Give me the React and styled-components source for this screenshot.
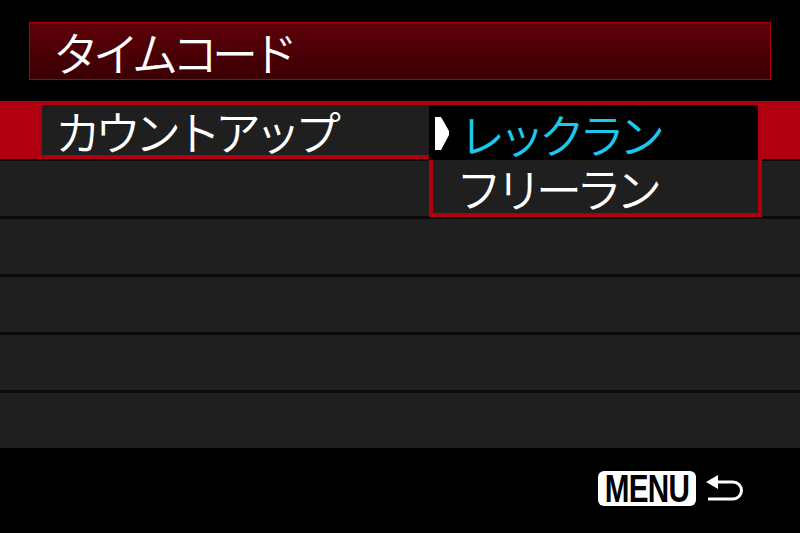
import React from "react";
import styled, { createGlobalStyle } from "styled-components";

const GlobalStyle = createGlobalStyle`
  html, body {
    margin: 0;
    padding: 0;
    background: #000;
  }
`;

const JP = `"Noto Sans CJK JP", "Noto Sans", sans-serif`;

const Screen = styled.div`
  position: relative;
  width: 800px;
  height: 533px;
  background: #000;
  display: flex;
  flex-direction: column;
  font-family: ${JP};
  color: #fff;
  overflow: hidden;
`;

const TitleBar = styled.div`
  margin: 22px 29px 0;
  height: 56px;
  border: 1px solid #b0000f;
  background: linear-gradient(#5e0008, #3a0004);
  display: flex;
  align-items: center;
  padding-left: 23px;
`;

const Label = styled.span`
  font-size: 46px;
  font-weight: 350;
  letter-spacing: -6px;
  line-height: 46px;
  color: ${({ $color }) => $color || "#fff"};
  white-space: nowrap;
`;

const List = styled.div`
  margin-top: 21px;
  display: flex;
  flex-direction: column;
`;

const SelectedRow = styled.div`
  height: 58px;
  background: #b0000f;
  display: flex;
  align-items: center;
  padding-left: 42px;
`;

const RowInner = styled.div`
  width: 400px;
  height: 50px;
  background: #1f1f1f;
  display: flex;
  align-items: center;
  padding-left: 13px;
`;

const Row = styled.div`
  height: 55px;
  background: #1f1f1f;
  border-top: ${({ $sep }) => $sep}px solid #0b0b0b;
`;

const Footer = styled.div`
  margin-top: 23px;
  display: flex;
  justify-content: flex-end;
  align-items: center;
  gap: 10px;
  padding-right: 56px;
`;

const MenuButton = styled.div`
  width: 98px;
  height: 35px;
  border-radius: 6px;
  background: #fff;
  display: flex;
  align-items: center;
  justify-content: center;
`;

const MenuText = styled.span`
  display: inline-block;
  font-family: "Liberation Sans", Arial, sans-serif;
  font-weight: 700;
  font-size: 38px;
  line-height: 1;
  color: #000;
  letter-spacing: -1px;
  transform: scaleX(0.78);
  margin: 0 -14px;
`;

const Dropdown = styled.div`
  position: absolute;
  left: 429px;
  top: 105px;
  width: 325px;
  padding: 0 4px 4px;
  background: #b0000f;
  display: flex;
  flex-direction: column;
`;

const Option = styled.div`
  height: ${({ $selected }) => ($selected ? 55 : 53)}px;
  margin-left: ${({ $selected }) => ($selected ? -4 : 0)}px;
  background: ${({ $selected }) => ($selected ? "#000" : "#1f1f1f")};
  display: flex;
  align-items: center;
  padding-left: ${({ $selected }) => ($selected ? 6 : 23)}px;
  gap: 9px;
`;

const Marker = () => (
  <svg width="15" height="34" viewBox="0 0 15 34">
    <polygon points="0,1 6,1 14,15 14,19 6,34 0,34" fill="#fff" />
  </svg>
);

const ReturnIcon = () => (
  <svg width="38" height="28" viewBox="0 0 38 28">
    <polygon points="0,7 12,0 12,14" fill="#fff" />
    <path
      d="M11 7 H27 A8.5 8.5 0 0 1 27 24 H2"
      fill="none"
      stroke="#fff"
      strokeWidth="3"
    />
  </svg>
);

export default function App() {
  return (
    <>
      <GlobalStyle />
      <Screen>
        <TitleBar>
          <Label>タイムコード</Label>
        </TitleBar>
        <List>
          <SelectedRow>
            <RowInner>
              <Label>カウントアップ</Label>
            </RowInner>
          </SelectedRow>
          <Row $sep={2} />
          <Row $sep={3} />
          <Row $sep={3} />
          <Row $sep={3} />
          <Row $sep={3} />
        </List>
        <Footer>
          <MenuButton>
            <MenuText>MENU</MenuText>
          </MenuButton>
          <ReturnIcon />
        </Footer>
        <Dropdown>
          <Option $selected>
            <Marker />
            <Label $color="#1ec8ec">レックラン</Label>
          </Option>
          <Option>
            <Label>フリーラン</Label>
          </Option>
        </Dropdown>
      </Screen>
    </>
  );
}
